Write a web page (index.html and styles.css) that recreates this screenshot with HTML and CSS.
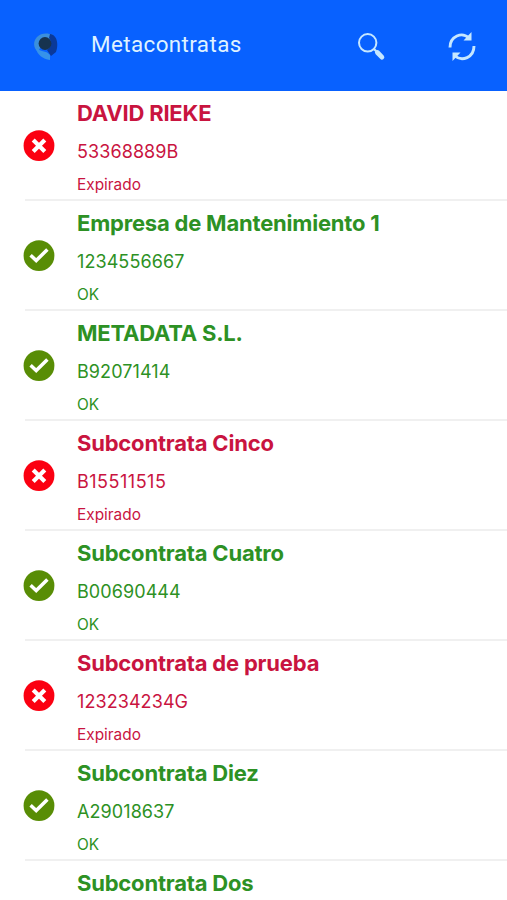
FILE: index.html
```html
<!DOCTYPE html>
<html lang="es">
<head>
<meta charset="utf-8">
<meta name="viewport" content="width=device-width">
<title>Metacontratas</title>
<link rel="stylesheet" href="styles.css">
</head>
<body>
<svg width="0" height="0" class="defs" aria-hidden="true">
  <symbol id="ok" viewBox="0 0 32 32"><circle cx="16" cy="15.700" r="15.4" fill="#588d05"/><path d="M7.600 15.200l5.600 5.300L24.400 9.500" fill="none" stroke="#fff" stroke-width="3.5"/></symbol>
  <symbol id="bad" viewBox="0 0 32 32"><circle cx="16" cy="15.700" r="15.4" fill="#fb0011"/><path d="M10.200 9.900l11.600 11.600M21.800 9.900L10.200 21.500" fill="none" stroke="#fff" stroke-width="4.200"/></symbol>
</svg>
<header class="bar">
  <svg class="logo" viewBox="0 0 50 50"><path d="M17 16C21 12 27 11.500 33 14L29 19 20 27 18 31C13 27 13 20 17 16Z" fill="#3b8fdc"/><path d="M30 13C38 14 38.500 25 36 31L31 35 27 29C32 26 32 20 29 17Z" fill="#0a3999"/><path d="M16 27C20 31 26 29 30 34L30 39C23 38 17 34 16 27Z" fill="#3692ea"/><circle cx="25" cy="22.500" r="6.400" fill="#17334f"/></svg>
  <h1 class="brand">Metacontratas</h1>
  <svg class="search" viewBox="0 0 50 50" fill="none" stroke="#c6e7ff"><circle cx="22.700" cy="21.800" r="8.700" stroke-width="2"/><path d="M28.700 27.800l3 3" stroke-width="2.200"/><path d="M32.400 31.500l4.500 4.700" stroke-width="4.800" stroke-linecap="round"/></svg>
  <svg class="refresh" viewBox="0 0 50 50"><path d="M13 26.500C13 15 25 10.500 32 17M37 25C37 36.500 25 41 18 35" fill="none" stroke="#c6e7ff" stroke-width="2.900"/><path d="M34.500 11v8.500H26.500ZM15.500 40v-8.500H23.500Z" fill="#c6e7ff"/></svg>
</header>
<main class="list">
  <article class="row expired"><svg class="mark"><use href="#bad"/></svg><div class="info"><h2>DAVID RIEKE</h2><p class="code">53368889B</p><p class="state">Expirado</p></div></article>
  <article class="row valid"><svg class="mark"><use href="#ok"/></svg><div class="info"><h2>Empresa de Mantenimiento 1</h2><p class="code">1234556667</p><p class="state">OK</p></div></article>
  <article class="row valid"><svg class="mark"><use href="#ok"/></svg><div class="info"><h2>METADATA S.L.</h2><p class="code">B92071414</p><p class="state">OK</p></div></article>
  <article class="row expired"><svg class="mark"><use href="#bad"/></svg><div class="info"><h2>Subcontrata Cinco</h2><p class="code spaced">B15511515</p><p class="state">Expirado</p></div></article>
  <article class="row valid"><svg class="mark"><use href="#ok"/></svg><div class="info"><h2>Subcontrata Cuatro</h2><p class="code">B00690444</p><p class="state">OK</p></div></article>
  <article class="row expired"><svg class="mark"><use href="#bad"/></svg><div class="info"><h2>Subcontrata de prueba</h2><p class="code">123234234G</p><p class="state">Expirado</p></div></article>
  <article class="row valid"><svg class="mark"><use href="#ok"/></svg><div class="info"><h2>Subcontrata Diez</h2><p class="code">A29018637</p><p class="state">OK</p></div></article>
  <article class="row valid last"><div class="info"><h2>Subcontrata Dos</h2></div></article>
</main>
</body>
</html>
```
FILE: styles.css
```css
* { box-sizing: border-box; }
body { margin: 0; background: #fff; font-family: Inter, "Liberation Sans", sans-serif; }
h1, h2, p { margin: 0; }
.defs { display: block; height: 0; }
.bar { display: flex; align-items: center; height: 91px; padding-left: 20px; background: #0861ff; }
.bar svg { width: 50px; height: 50px; flex: none; }
.brand { width: 254px; margin-left: 21px; padding-bottom: 3px; color: #dff2ff; font: 400 22.4px/30px Roboto, sans-serif; letter-spacing: 0.4px; }
.refresh { margin-left: 42px; }
.row { display: flex; height: 110px; padding-left: 23px; background: linear-gradient(#f0f0f0, #f0f0f0) 25px 108px / 100% 2px no-repeat; }
.mark { width: 32px; height: 32px; margin-top: 39px; flex: none; }
.info { margin-left: 22px; white-space: nowrap; }
.last { height: 39px; }
.last .info { margin-left: 54px; }
.expired { color: #c9143f; }
.valid { color: #2d9124; }
h2 { height: 44px; font-size: 22px; line-height: 44px; font-weight: 700; letter-spacing: -0.2px; }
.last h2 { height: 39px; }
.code { height: 32px; font-size: 18px; line-height: 34px; letter-spacing: 0.08px; }
.spaced { letter-spacing: 0.5px; }
.state { height: 32px; font-size: 15.4px; line-height: 35px; }
```
